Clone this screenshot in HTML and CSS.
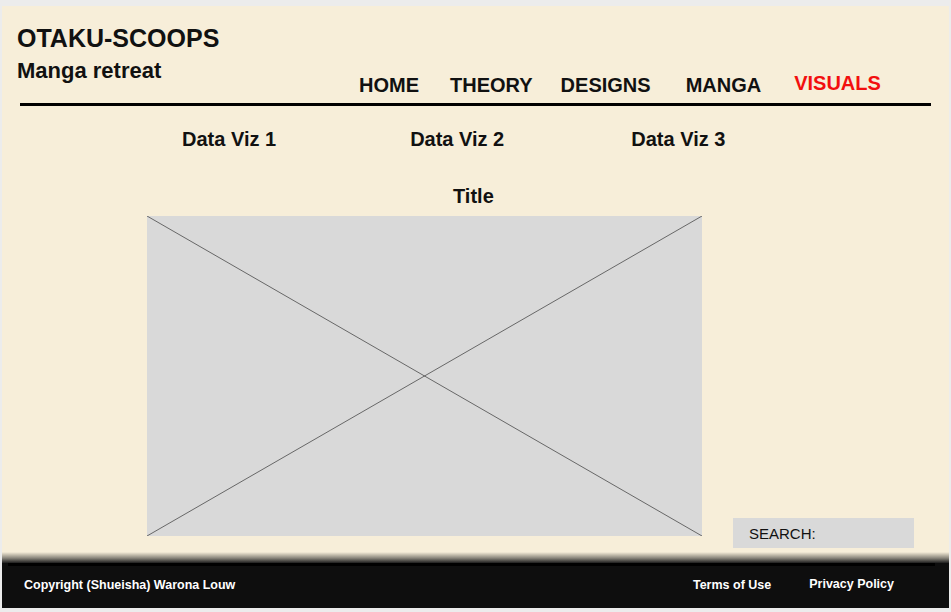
FILE: index.html
```html
<!DOCTYPE html>
<html lang="en">
<head>
  <meta charset="UTF-8" />
  <meta name="viewport" content="width=device-width, initial-scale=1.0"/>
  <title>Otaku-Scoops | Visuals</title>
  <link rel="stylesheet" href="styles.css">
</head>
<body>

  <div class="page">
    <header class="header">
      <div class="brand">
        <h1>OTAKU-SCOOPS</h1>
        <h2>Manga retreat</h2>
      </div>
      <nav class="nav">
        <a href="#">HOME</a>
        <a href="#" class="theory">THEORY</a>
        <a href="#" class="designs">DESIGNS</a>
        <a href="#" class="manga">MANGA</a>
        <a href="#" class="active">VISUALS</a>
      </nav>
    </header>
    <div class="rule"></div>

    <main class="main">
      <div class="viz-tabs">
        <span>Data Viz 1</span>
        <span class="viz-2">Data Viz 2</span>
        <span class="viz-3">Data Viz 3</span>
      </div>

      <h3 class="chart-title">Title</h3>

      <div class="chart-row">
        <div class="chart">
          <svg width="555" height="320" viewBox="0 0 555 320">
            <line x1="0" y1="0" x2="555" y2="320" stroke="#4a4a4a" stroke-width="0.8"/>
            <line x1="555" y1="0" x2="0" y2="320" stroke="#4a4a4a" stroke-width="0.8"/>
          </svg>
        </div>
        <div class="search">SEARCH:</div>
      </div>
    </main>

    <div class="footer-fade"></div>
    <footer class="footer">
      <div class="footer-line"></div>
      <div class="footer-row">
        <span>Copyright (Shueisha) Warona Louw</span>
        <div class="footer-links">
          <a href="#">Terms of Use</a>
          <a href="#" class="privacy">Privacy Policy</a>
        </div>
      </div>
    </footer>
  </div>

</body>
</html>
```

FILE: styles.css
```css
body {
  margin: 0;
  background: #ececec;
  font-family: "Liberation Sans", Arial, sans-serif;
  color: #111;
}
.page {
  margin: 6px 2px 0 2px;
  height: 602px;
  background: #f7eed9;
  display: flex;
  flex-direction: column;
}
.header {
  height: 97px;
  box-sizing: border-box;
  padding: 18px 0 6px 15px;
  display: flex;
  align-items: flex-end;
}
.brand {
  width: 342px;
  flex-shrink: 0;
  align-self: flex-start;
}
.brand h1 {
  margin: 0;
  font-size: 25px;
  line-height: 28px;
}
.brand h2 {
  margin: 6px 0 0;
  font-size: 22px;
  line-height: 26px;
}
.nav {
  display: flex;
  align-items: flex-end;
}
.nav a {
  color: #111;
  text-decoration: none;
  font-weight: bold;
  font-size: 20px;
  line-height: 24px;
}
.nav .theory {
  margin-left: 31px;
}
.nav .designs {
  margin-left: 28px;
}
.nav .manga {
  margin-left: 35px;
}
.nav .active {
  margin-left: 33px;
  color: #f20f0f;
  padding-bottom: 2px;
}
.rule {
  height: 3px;
  background: #000;
  margin: 0 18px;
}
.main {
  flex: 1;
}
.viz-tabs {
  display: flex;
  padding-left: 180px;
  margin-top: 22px;
}
.viz-tabs span,
.chart-title {
  font-weight: bold;
  font-size: 20px;
  line-height: 22px;
}
.viz-tabs .viz-2 {
  margin-left: 134px;
}
.viz-tabs .viz-3 {
  margin-left: 127px;
}
.chart-title {
  margin: 35px 0 0 451px;
}
.chart-row {
  display: flex;
  margin-top: 9px;
  padding-left: 145px;
}
.chart {
  width: 555px;
  height: 320px;
  background: #d9d9d9;
}
.chart svg {
  display: block;
}
.search {
  margin: 302px 0 0 31px;
  width: 181px;
  height: 30px;
  box-sizing: border-box;
  padding-left: 16px;
  background: #d9d9d9;
  font-size: 15px;
  line-height: 31px;
}
.footer-fade {
  height: 11px;
  background: linear-gradient(to bottom, #f7eed9, #8a867c 55%, #1e1e1e);
}
.footer {
  height: 45px;
  background: #0e0e0e;
  color: #fff;
}
.footer-line {
  height: 3px;
  background: #000;
  margin: 0 14px 0 6px;
}
.footer-row {
  display: flex;
  justify-content: space-between;
  padding: 12px 55px 0 22px;
  font-size: 12.5px;
  line-height: 15px;
  font-weight: bold;
}
.footer-links {
  display: flex;
  gap: 38px;
}
.footer-links a {
  color: #fff;
  text-decoration: none;
}
.footer-links .privacy {
  margin-top: -1px;
}
```
